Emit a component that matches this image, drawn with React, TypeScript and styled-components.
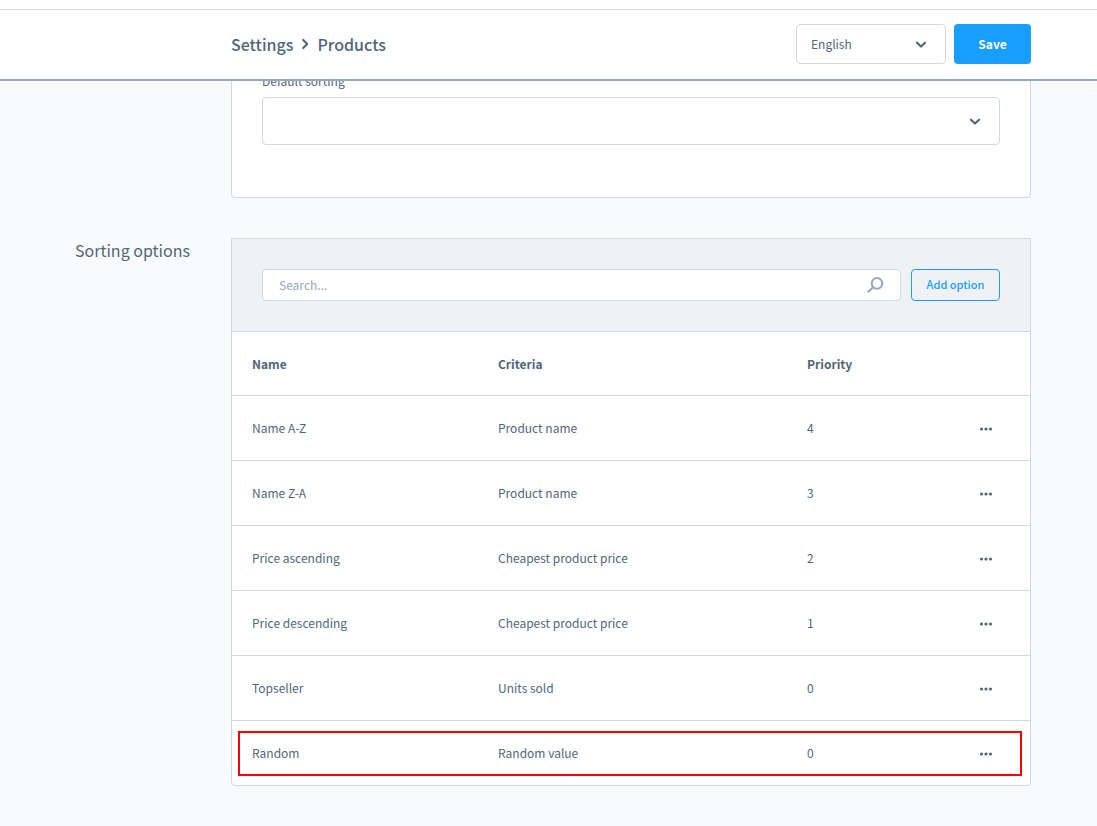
import React from 'react';
import styled, { createGlobalStyle } from 'styled-components';

const color = {
  text: '#52667a',
  muted: '#98a8b8',
  border: '#d1d9e0',
  accent: '#189eff',
  page: '#f9fafc',
  toolbar: '#f0f1f5',
};

const GlobalStyle = createGlobalStyle`
  *, *::before, *::after { box-sizing: border-box; }
  body {
    margin: 0;
    background: ${color.page};
    color: ${color.text};
    font-family: 'Noto Sans CJK SC', 'Noto Sans', sans-serif;
    font-size: 12px;
    line-height: 20px;
  }
  button, input, select { font: inherit; color: inherit; }
`;

const Page = styled.div`
  min-height: 100vh;
  overflow: hidden;
`;

const Header = styled.header`
  position: relative;
  z-index: 1;
  padding-top: 9px;
  background: #fff;
  border-bottom: 2px solid ${color.muted};
`;

const HeaderBar = styled.div`
  display: flex;
  align-items: center;
  justify-content: space-between;
  gap: 8px;
  padding: 14px 66px 15px 231px;
  border-top: 1px solid ${color.border};
`;

const Breadcrumb = styled.nav`
  display: flex;
  align-items: center;
  gap: 8px;
  font-size: 16px;
  line-height: 24px;
  font-weight: 500;
`;

const Crumb = styled.a`
  color: inherit;
  text-decoration: none;
`;

const Actions = styled.div`
  display: flex;
  gap: 8px;
`;

const SelectWrap = styled.div<{ $width?: string; $inset: number }>`
  display: grid;
  align-items: center;
  width: ${(p) => p.$width ?? '100%'};

  > * { grid-area: 1 / 1; }
  > svg {
    justify-self: end;
    margin-right: ${(p) => p.$inset}px;
    pointer-events: none;
  }
`;

const Select = styled.select<{ $height: number }>`
  width: 100%;
  height: ${(p) => p.$height}px;
  padding: 0 14px;
  appearance: none;
  background: #fff;
  border: 1px solid ${color.border};
  border-radius: 4px;
`;

const SaveButton = styled.button`
  min-width: 77px;
  height: 40px;
  padding: 0 20px;
  background: ${color.accent};
  border: 0;
  border-radius: 4px;
  color: #fff;
  font-weight: 700;
`;

const Content = styled.main`
  display: flex;
  flex-direction: column;
  gap: 40px;
  margin-top: -41px;
  padding: 0 66px 40px 75px;
`;

const Section = styled.section`
  display: grid;
  grid-template-columns: 116px minmax(0, 1fr);
  column-gap: 40px;
`;

const SectionTitle = styled.h2`
  margin: 0;
  font-size: 16px;
  line-height: 24px;
  font-weight: 400;
  white-space: nowrap;
`;

const Card = styled.div<{ $squareTop?: boolean }>`
  grid-column: 2;
  overflow: hidden;
  background: #fff;
  border: 1px solid ${color.border};
  border-radius: ${(p) => (p.$squareTop ? '0 0 4px 4px' : '4px')};
`;

const Field = styled.div`
  padding: 30px 30px 52px;
`;

const FieldLabel = styled.label`
  display: block;
  margin-bottom: 6px;
`;

const Toolbar = styled.div`
  display: flex;
  gap: 10px;
  padding: 30px;
  background: ${color.toolbar};
  border-bottom: 1px solid ${color.border};
`;

const SearchBox = styled.div`
  display: flex;
  flex: 1;
  align-items: center;
  height: 32px;
  padding: 0 16px;
  background: #fff;
  border: 1px solid ${color.border};
  border-radius: 4px;
`;

const SearchInput = styled.input`
  flex: 1;
  min-width: 0;
  padding: 0;
  background: none;
  border: 0;
  outline: 0;

  &::placeholder { color: ${color.muted}; opacity: 1; }
`;

const AddButton = styled.button`
  width: 89px;
  height: 32px;
  padding: 0 0 2px;
  background: transparent;
  border: 1px solid ${color.accent};
  border-radius: 4px;
  color: ${color.accent};
  font-size: 11px;
  font-weight: 500;
`;

const Table = styled.table`
  width: 100%;
  table-layout: fixed;
  border-collapse: separate;
  border-spacing: 0;
`;

const HeadCell = styled.th<{ $width: number }>`
  width: ${(p) => p.$width}px;
  height: 64px;
  padding: 0 20px;
  border-bottom: 1px solid ${color.border};
  text-align: left;
  font-weight: 700;
`;

const Row = styled.tr`
  position: relative;

  &:last-child td { height: 64px; border-bottom: 0; }
`;

const Cell = styled.td`
  height: 65px;
  padding: 0 20px;
  border-bottom: 1px solid ${color.border};
`;

const MenuCell = styled(Cell)`
  text-align: center;
`;

const MenuButton = styled.button`
  display: inline-flex;
  align-items: center;
  justify-content: center;
  width: 24px;
  height: 24px;
  padding: 0;
  background: none;
  border: 0;
`;

const Highlight = styled.span`
  position: absolute;
  inset: 10px 8px 9px 6px;
  border: 2px solid #ff0000;
  pointer-events: none;
`;

const ChevronDown = () => (
  <svg width="12" height="10" viewBox="0 0 12 10" fill="none" stroke={color.text} strokeWidth="2.2" strokeLinecap="round" strokeLinejoin="round" aria-hidden="true">
    <path d="M2 3.7l4 3.8 4-3.8" />
  </svg>
);

const ChevronRight = () => (
  <svg width="8" height="12" viewBox="0 0 8 12" fill="none" stroke={color.text} strokeWidth="2.2" strokeLinecap="round" strokeLinejoin="round" aria-hidden="true">
    <path d="M2.2 2l4 4-4 4" />
  </svg>
);

const SearchIcon = () => (
  <svg width="18" height="18" viewBox="0 0 18 18" fill="none" stroke={color.muted} strokeWidth="2" strokeLinecap="round" aria-hidden="true">
    <circle cx="11" cy="7.4" r="5.3" />
    <path d="M7.2 11.2L2.2 15.8" />
  </svg>
);

const Dots = () => (
  <svg width="14" height="4" viewBox="0 0 14 4" fill={color.text} aria-hidden="true">
    <circle cx="2.5" cy="2" r="1.6" />
    <circle cx="7" cy="2" r="1.6" />
    <circle cx="11.5" cy="2" r="1.6" />
  </svg>
);

const options = [
  { name: 'Name A-Z', criteria: 'Product name', priority: 4 },
  { name: 'Name Z-A', criteria: 'Product name', priority: 3 },
  { name: 'Price ascending', criteria: 'Cheapest product price', priority: 2 },
  { name: 'Price descending', criteria: 'Cheapest product price', priority: 1 },
  { name: 'Topseller', criteria: 'Units sold', priority: 0 },
  { name: 'Random', criteria: 'Random value', priority: 0, highlighted: true },
];

export default function App() {
  return (
    <Page>
      <GlobalStyle />
      <Header>
        <HeaderBar>
          <Breadcrumb aria-label="Breadcrumb">
            <Crumb href="#settings">Settings</Crumb>
            <ChevronRight />
            <Crumb href="#products" aria-current="page">Products</Crumb>
          </Breadcrumb>
          <Actions>
            <SelectWrap $width="150px" $inset={19}>
              <Select $height={40} aria-label="Language" defaultValue="en">
                <option value="en">English</option>
              </Select>
              <ChevronDown />
            </SelectWrap>
            <SaveButton type="button">Save</SaveButton>
          </Actions>
        </HeaderBar>
      </Header>
      <Content>
        <Section>
          <Card>
            <Field>
              <FieldLabel htmlFor="default-sorting">Default sorting</FieldLabel>
              <SelectWrap $inset={19}>
                <Select id="default-sorting" $height={48} defaultValue="">
                  <option value="" />
                </Select>
                <ChevronDown />
              </SelectWrap>
            </Field>
          </Card>
        </Section>
        <Section>
          <SectionTitle>Sorting options</SectionTitle>
          <Card $squareTop>
            <Toolbar>
              <SearchBox>
                <SearchInput type="text" placeholder="Search..." aria-label="Search" />
                <SearchIcon />
              </SearchBox>
              <AddButton type="button">Add option</AddButton>
            </Toolbar>
            <Table>
              <thead>
                <tr>
                  <HeadCell $width={246} scope="col">Name</HeadCell>
                  <HeadCell $width={309} scope="col">Criteria</HeadCell>
                  <HeadCell $width={155} scope="col">Priority</HeadCell>
                  <HeadCell $width={88} scope="col" aria-label="Actions" />
                </tr>
              </thead>
              <tbody>
                {options.map((option) => (
                  <Row key={option.name}>
                    <Cell>
                      {option.name}
                      {option.highlighted && <Highlight />}
                    </Cell>
                    <Cell>{option.criteria}</Cell>
                    <Cell>{option.priority}</Cell>
                    <MenuCell>
                      <MenuButton type="button" aria-label={`Actions for ${option.name}`}>
                        <Dots />
                      </MenuButton>
                    </MenuCell>
                  </Row>
                ))}
              </tbody>
            </Table>
          </Card>
        </Section>
      </Content>
    </Page>
  );
}
